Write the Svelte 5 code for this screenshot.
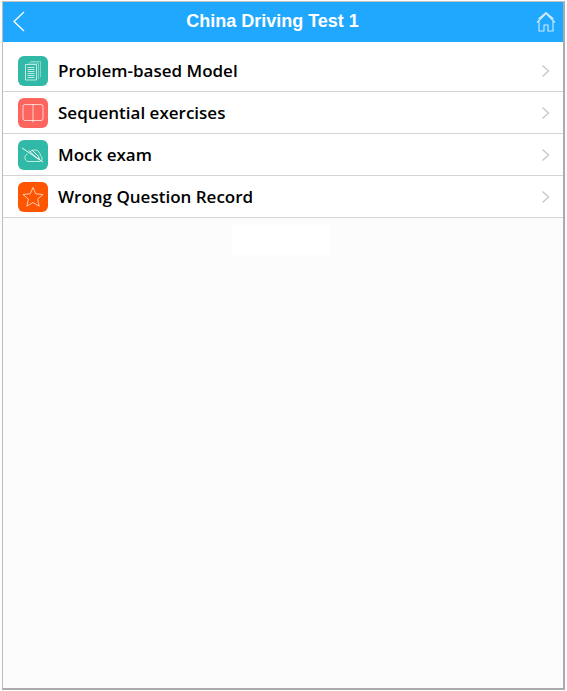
<script>
	const items = [
		{ label: 'Problem-based Model', color: '#2fb9a6', icon: 'docs' },
		{ label: 'Sequential exercises', color: '#fd665e', icon: 'book' },
		{ label: 'Mock exam', color: '#2fb9a6', icon: 'exam' },
		{ label: 'Wrong Question Record', color: '#ff5500', icon: 'star' },
	];
</script>

<div class="frame">
	<header>
		<svg class="back" width="14" height="22" viewBox="0 0 14 22">
			<path d="M12 1 2 10.500 12 20" />
		</svg>
		<h1>China Driving Test 1</h1>
		<svg class="home" width="20" height="20" viewBox="0 0 20 20">
			<path d="M1 10.500 10 1.500l9 9M3 9v10h5v-6h4v6h5V9M2.500 7 10 .5l7.500 6.500" />
		</svg>
	</header>

	<ul>
		{#each items as item}
			<li>
				<span class="badge" style:background={item.color}>
					<svg width="26" height="26" viewBox="0 0 26 26">
						{#if item.icon === 'docs'}
							<path class="faint" d="M10.500 3.500h10v15.500M8 5h10.500v16" />
							<path d="M5.500 6.500h11v15.500h-11zM7.500 9.500h7M7.500 11.500h7M7.500 13.500h7M7.500 15.500h7M7.500 17.500h7M7.500 19.500h7" />
						{:else if item.icon === 'book'}
							<path d="M5 4.500h16a2 2 0 0 1 2 2v12a2 2 0 0 1-2 2H5a2 2 0 0 1-2-2v-12a2 2 0 0 1 2-2zM13 4.500v18" />
						{:else if item.icon === 'exam'}
							<path class="strong" d="M2 6 23 20" />
							<path d="M7.500 12c-3.500 1-3.500 7 .5 7.500h11c3.500 0 4-4 1.500-6-.5-3-2.500-5.500-5.500-5.500-2 0-3.500 .5-5 1.500" />
							<path class="strong" d="M9 8.500l7.500 7.500 3 1.500-1-3-6.500-6.500" />
						{:else}
							<path d="M13 3.500l2.800 6.300 7.200 .7-5.400 4.700 1.600 7-6.200-3.700-6.200 3.700 1.600-7L3 10.500l7.200-.7z" />
						{/if}
					</svg>
				</span>
				<span class="label">{item.label}</span>
				<svg class="chev" width="9" height="14" viewBox="0 0 9 14">
					<path d="M1.500 1.500l6 5.500-6 5.500" />
				</svg>
			</li>
		{/each}
	</ul>

	<div class="blank"></div>
</div>

<style>
	:global(body) {
		background: #fff;
	}

	.frame {
		box-sizing: border-box;
		height: 691px;
		width: 567px;
		padding: 2px 4px 3px 3px;
		display: flex;
		flex-direction: column;
		position: relative;
		background: #fcfcfc;
	}

	.frame::before {
		content: '';
		position: absolute;
		inset: 1px 2px 1px 2px;
		border-style: solid;
		border-color: #c4c4c4 #ababab #ababab #bdbdbd;
		border-width: 1px 2px 2px 1px;
		pointer-events: none;
	}

	header {
		height: 40px;
		background: #20a8ff;
		display: flex;
		align-items: center;
		justify-content: space-between;
		padding: 0 7px 0 9px;
		position: relative;
		z-index: 1;
	}

	h1 {
		margin: 0 0 2px;
		padding-right: 17px;
		flex: 1;
		text-align: center;
		color: #fff;
		font: bold 18px 'Liberation Sans', sans-serif;
	}

	.back path,
	.home path {
		fill: none;
		stroke: #fff;
		stroke-width: 1.3;
	}

	.home path {
		stroke: #cfeaff;
		stroke-width: 1.1;
	}

	ul {
		list-style: none;
		margin: 0;
		padding: 8px 0 0;
		background: #fff;
		position: relative;
		z-index: 1;
	}

	li {
		box-sizing: border-box;
		height: 42px;
		display: flex;
		align-items: center;
		padding: 0 13px 0 15px;
		border-bottom: 1px solid #d4d4d4;
	}

	.badge {
		width: 30px;
		height: 30px;
		border-radius: 6px;
		display: flex;
		align-items: center;
		justify-content: center;
		margin-right: 10px;
		flex: none;
	}

	.badge path {
		fill: none;
		stroke: #fff;
		stroke-width: 1;
		opacity: 0.7;
	}

	.badge path.faint {
		opacity: 0.4;
	}

	.badge path.strong {
		opacity: 0.95;
	}

	.label {
		flex: 1;
		font: 600 17px 'Open Sans', sans-serif;
		color: #000;
	}

	.chev path {
		fill: none;
		stroke: #c4c4c4;
		stroke-width: 1.2;
	}

	.blank {
		align-self: center;
		width: 97px;
		height: 30px;
		margin-top: 7px;
		margin-left: -5px;
		background: #fff;
		position: relative;
		z-index: 1;
	}
</style>
